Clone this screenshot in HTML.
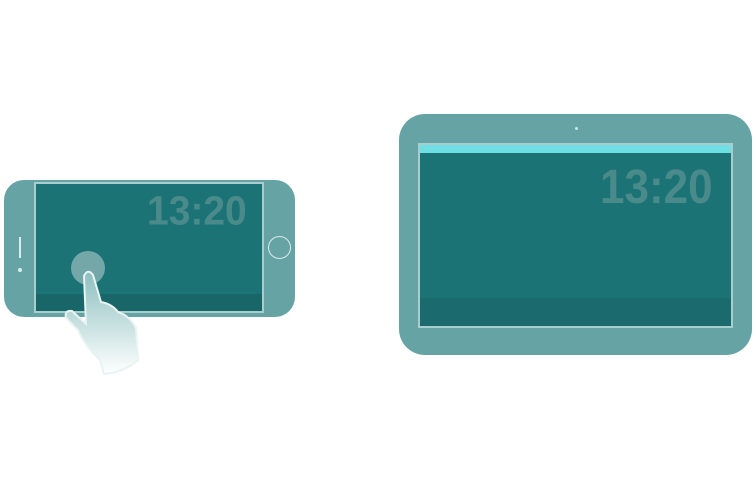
<!DOCTYPE html>
<html><head><style>
body{margin:0;width:756px;height:489px;background:#fff;overflow:hidden;position:relative;font-family:"Liberation Sans",sans-serif}
.a{position:absolute}
.t{position:absolute;color:#4a8a8a;font-weight:bold;transform-origin:left top}
</style></head><body>
<!-- phone -->
<div class="a" style="left:4px;top:180px;width:291px;height:137px;border-radius:20px;background:#66a3a5"></div>
<div class="a" style="left:34px;top:182px;width:226px;height:127px;border:2px solid #a9cccc;background:#1c7375;overflow:hidden">
  <div class="a" style="left:0;bottom:0;width:100%;height:17px;background:#196669"></div>
</div>
<div class="t" style="left:147px;top:189px;font-size:39px;line-height:44px;transform:scaleY(1.05)">13:20</div>
<div class="a" style="left:268px;top:236px;width:21px;height:21px;border:1.5px solid #d9ecec;border-radius:50%"></div>
<div class="a" style="left:19px;top:237px;width:1.5px;height:21px;background:#d9ecec"></div>
<div class="a" style="left:18px;top:268px;width:4px;height:4px;border-radius:50%;background:#d9ecec"></div>
<div class="a" style="left:71px;top:251px;width:34px;height:34px;border-radius:50%;background:#74a8a8"></div>
<svg class="a" style="left:0;top:0" width="300" height="400">
<defs><linearGradient id="g" x1="0" y1="0" x2="0" y2="1"><stop offset="0" stop-color="#8dbfbf"/><stop offset="1" stop-color="#fff"/></linearGradient></defs>
<path d="M84 276 Q88 268 93 275 L101 302 Q112 304 118 312 Q130 316 136 328 L138 360 Q125 372 104 374 L100 360 Q84 345 78 330 L66 318 Q64 310 72 311 L86 324 Z" fill="url(#g)" stroke="#e8f3f3" stroke-width="2"/>
</svg>
<!-- tablet -->
<div class="a" style="left:399px;top:114px;width:353px;height:241px;border-radius:26px;background:#66a3a5"></div>
<div class="a" style="left:575px;top:127px;width:3px;height:3px;border-radius:50%;background:#cfe5e5"></div>
<div class="a" style="left:418px;top:143px;width:311px;height:181px;border:2px solid #a9cccc;background:#1c7375;overflow:hidden">
  <div class="a" style="left:0;top:0;width:100%;height:8px;background:#70dfe4"></div>
  <div class="a" style="left:0;bottom:0;width:100%;height:28px;background:#1b6a6d"></div>
</div>
<div class="t" style="left:600px;top:160px;font-size:44px;line-height:50px;transform:scaleY(1.1)">13:20</div>
</body></html>
